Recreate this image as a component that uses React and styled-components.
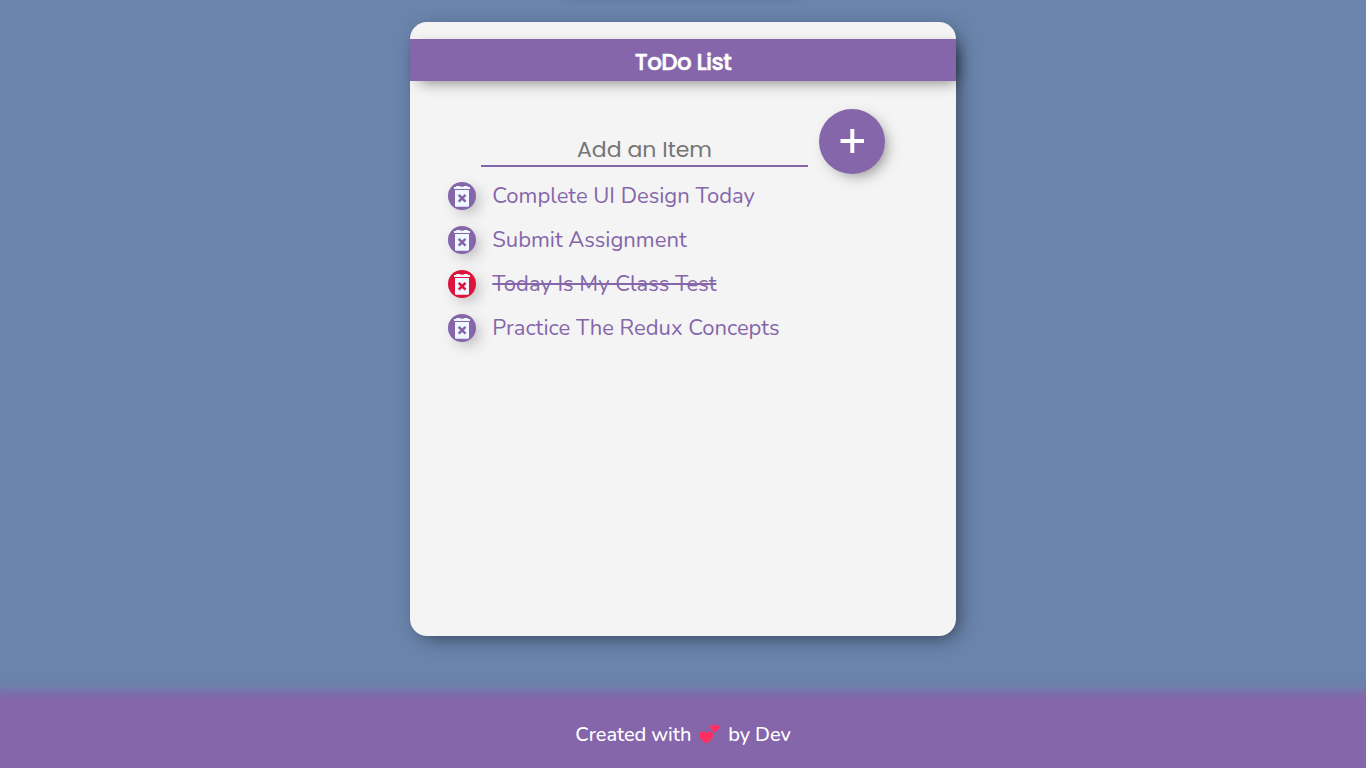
import React from "react";
import styled, { createGlobalStyle } from "styled-components";

const GlobalStyle = createGlobalStyle`
  * { box-sizing: border-box; margin: 0; padding: 0; }
  body { background: #6a84ac; overflow: hidden; }
`;

const body = `Nunito, "Open Sans", "Noto Sans", sans-serif`;
const heading = `Poppins, Lato, sans-serif`;

const Page = styled.div`
  height: 768px;
  display: flex;
  flex-direction: column;
  align-items: center;
  overflow: hidden;
  font-family: ${body};
`;

const TopGlow = styled.div`
  width: 236px;
  height: 22px;
  flex: none;
  &::before {
    content: "";
    display: block;
    height: 20px;
    margin-top: -24px;
    box-shadow: 0 2px 12px -4px rgba(0, 0, 0, 0.4);
  }
`;

const Card = styled.main`
  width: 546px;
  height: 614px;
  flex: none;
  padding-top: 17px;
  background: #f4f4f4;
  border-radius: 17px;
  box-shadow: 5px 5px 20px -5px rgba(0, 0, 0, 0.6);
`;

const Header = styled.header`
  height: 42px;
  display: flex;
  align-items: center;
  justify-content: center;
  padding-top: 3px;
  background: #8566aa;
  box-shadow: 5px 5px 15px -5px rgba(0, 0, 0, 0.55);
`;

const Title = styled.h1`
  color: #fff;
  font: 500 23px/30px ${heading};
  letter-spacing: -0.6px;
  -webkit-text-stroke: 0.5px #fff;
  white-space: nowrap;
`;

const Form = styled.div`
  display: flex;
  align-items: flex-start;
  gap: 11px;
  padding: 28px 0 0 71px;
`;

const Input = styled.input`
  width: 327px;
  height: 33px;
  margin-top: 25px;
  border: 0;
  border-bottom: 2px solid #8566aa;
  outline: 0;
  background: transparent;
  text-align: center;
  font: 400 22px ${heading};
  &::placeholder { color: #757575; opacity: 1; }
`;

const AddButton = styled.button`
  width: 66px;
  height: 65px;
  display: grid;
  place-items: center;
  border: 0;
  border-radius: 50%;
  background: #8566aa;
  box-shadow: 5px 5px 15px -5px rgba(0, 0, 0, 0.5);
`;

const List = styled.ul`
  list-style: none;
  padding: 0 0 0 38px;
`;

const Item = styled.li`
  height: 44px;
  display: flex;
  align-items: center;
  gap: 16.300px;
`;

const DeleteButton = styled.button`
  width: 28px;
  height: 28px;
  flex: none;
  border: 0;
  border-radius: 50%;
  background: ${(p) => (p.$active ? "#dc143c" : "#8566aa")};
  color: ${(p) => (p.$active ? "#dc143c" : "#8566aa")};
  box-shadow: 5px 5px 15px -3px rgba(0, 0, 0, 0.3);
  svg { display: block; }
`;

const Label = styled.span`
  color: #8566aa;
  font-size: 22px;
  line-height: 30px;
  white-space: nowrap;
  text-decoration: ${(p) => (p.$done ? "line-through 2px" : "none")};
`;

const Footer = styled.footer`
  width: 100%;
  height: 68px;
  flex: none;
  margin-top: auto;
  display: flex;
  align-items: center;
  justify-content: center;
  background: #8566aa;
  box-shadow: 0 0 10px 9px #8566aa;
  color: #fff;
  font-size: 20px;
  font-weight: 500;
  letter-spacing: -0.1px;
  white-space: nowrap;
  svg { margin: 0 8px 0 8px; }
`;

const TrashIcon = () => (
  <svg width="28" height="28" viewBox="0 0 28 28">
    <path d="M8.500 4h11l.5 1h2v2H6V5h2z" fill="#f0f8ff" />
    <path d="M12 4h4v1h-4z" fill="currentColor" fillOpacity="0.6" />
    <path d="M7 8h14v15.500q0 1.200-1.200 1.200H8.200Q7 24.700 7 23.500z" fill="#f0f8ff" />
    <path d="M10.700 12.800l6.800 6.800M17.500 12.800l-6.800 6.800" stroke="currentColor" strokeWidth="2.600" />
  </svg>
);

const PlusIcon = () => (
  <svg width="24" height="25" viewBox="0 0 24 25">
    <path d="M0.500 12h23.500M12.300 0v24" stroke="#fff" strokeWidth="4" />
  </svg>
);

const HeartsIcon = () => (
  <svg width="21" height="21" viewBox="0 0 21 21" fill="#ff2e63">
    <path d="M7.300 19.600C4 17.600.3 14.300.3 11 .3 7 5.300 6 7.300 9.200c2-3.200 7-2.200 7 1.800 0 3.300-3.700 6.600-7 8.600z" />
    <path d="M15.700 8.300c-2.300-1.400-4.600-3.200-4.600-5.200 0-2.700 3.300-3.200 4.600-1.100 1.300-2.100 4.600-1.600 4.600 1.100 0 2-2.300 3.800-4.600 5.200z" />
  </svg>
);

const items = [
  { text: "Complete UI Design Today" },
  { text: "Submit Assignment" },
  { text: "Today Is My Class Test", done: true },
  { text: "Practice The Redux Concepts" },
];

export default function App() {
  return (
    <Page>
      <GlobalStyle />
      <TopGlow />
      <Card>
        <Header>
          <Title>ToDo List</Title>
        </Header>
        <Form>
          <Input placeholder="Add an Item" />
          <AddButton aria-label="Add">
            <PlusIcon />
          </AddButton>
        </Form>
        <List>
          {items.map((item) => (
            <Item key={item.text}>
              <DeleteButton $active={item.done} aria-label="Delete">
                <TrashIcon />
              </DeleteButton>
              <Label $done={item.done}>{item.text}</Label>
            </Item>
          ))}
        </List>
      </Card>
      <Footer>
        <span>Created with</span>
        <HeartsIcon />
        <span>by Dev</span>
      </Footer>
    </Page>
  );
}
